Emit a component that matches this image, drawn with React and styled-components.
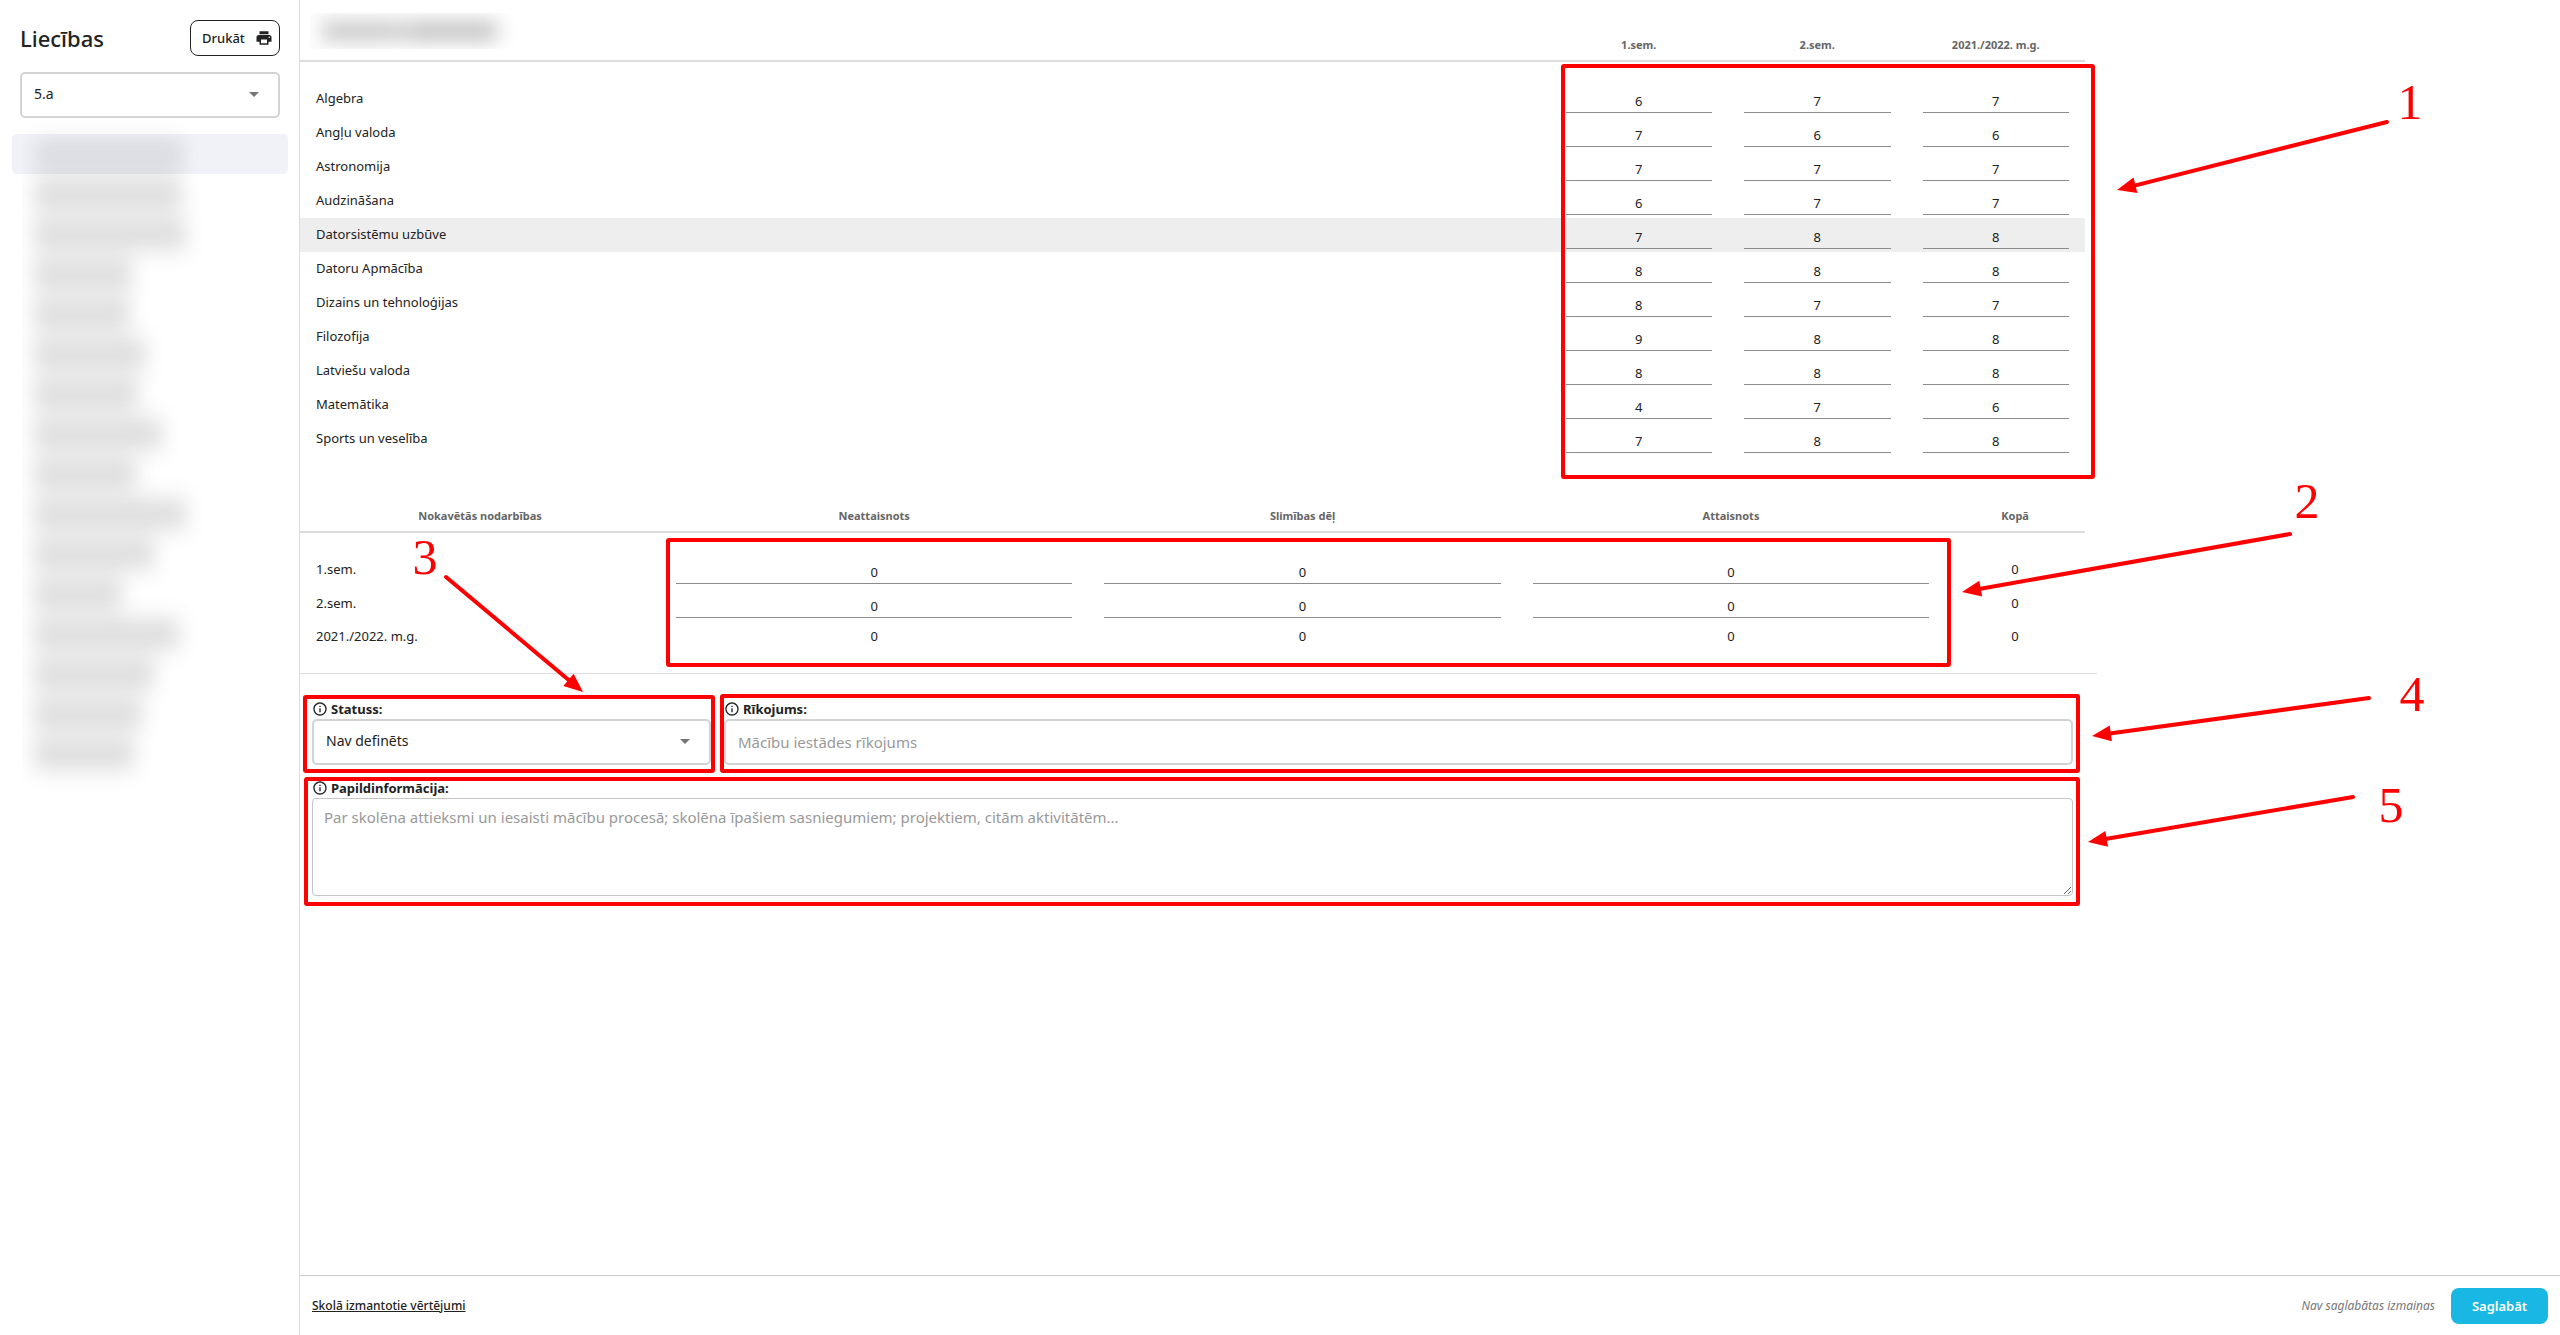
import React from "react";
import styled, { createGlobalStyle } from "styled-components";
import { MdArrowDropDown, MdInfoOutline, MdPrint } from "react-icons/md";

const TERMS = ["1.sem.", "2.sem.", "2021./2022. m.g."];

const SUBJECTS = [
  { name: "Algebra", grades: [6, 7, 7] },
  { name: "Angļu valoda", grades: [7, 6, 6] },
  { name: "Astronomija", grades: [7, 7, 7] },
  { name: "Audzināšana", grades: [6, 7, 7] },
  { name: "Datorsistēmu uzbūve", grades: [7, 8, 8], active: true },
  { name: "Datoru Apmācība", grades: [8, 8, 8] },
  { name: "Dizains un tehnoloģijas", grades: [8, 7, 7] },
  { name: "Filozofija", grades: [9, 8, 8] },
  { name: "Latviešu valoda", grades: [8, 8, 8] },
  { name: "Matemātika", grades: [4, 7, 6] },
  { name: "Sports un veselība", grades: [7, 8, 8] },
];

const ABSENCE_KINDS = ["Neattaisnots", "Slimības dēļ", "Attaisnots"];

// Student names are hidden, only the length of each is kept
const STUDENTS = [
  150, 148, 152, 98, 96, 112, 104, 128, 102, 152, 120, 88, 145, 120, 108, 100,
];

const FRAMES = [
  { x: 1563, y: 66, width: 530, height: 411 },
  { x: 668, y: 540, width: 1281, height: 125 },
  { x: 305, y: 697, width: 408, height: 74 },
  { x: 722, y: 696, width: 1356, height: 75 },
  { x: 306, y: 779, width: 1772, height: 125 },
];

const ARROWS = [
  { label: "1", at: [2410, 119], from: [2387, 122], to: [2117, 190] },
  { label: "2", at: [2307, 518], from: [2290, 534], to: [1962, 592] },
  { label: "3", at: [425, 574], from: [446, 577], to: [583, 692] },
  { label: "4", at: [2412, 711], from: [2369, 698], to: [2092, 736] },
  { label: "5", at: [2391, 822], from: [2353, 797], to: [2088, 842] },
];

const App = () => {
  return (
    <Page>
      <GlobalStyle />
      <Sidebar />
      <Main>
        <Content>
          <Tables>
            <GradeTable />
            <AbsenceTable />
          </Tables>
          <DetailsForm />
        </Content>
        <Footer>
          <FooterLink href="#vertejumi">Skolā izmantotie vērtējumi</FooterLink>
          <SaveGroup>
            <SaveHint>Nav saglabātas izmaiņas</SaveHint>
            <SaveButton type="button">Saglabāt</SaveButton>
          </SaveGroup>
        </Footer>
      </Main>
      <Annotations />
    </Page>
  );
};

const Sidebar = () => {
  return (
    <Aside>
      <SidebarHeader>
        <Title>Liecības</Title>
        <PrintButton type="button">
          Drukāt
          <MdPrint size={18} />
        </PrintButton>
      </SidebarHeader>
      <SelectWrapper>
        <Select aria-label="Klase" defaultValue="5.a">
          <option>5.a</option>
        </Select>
        <MdArrowDropDown size={24} />
      </SelectWrapper>
      <StudentList>
        {STUDENTS.map((length, index) => (
          <Student key={index} $selected={index === 0}>
            <HiddenName $selected={index === 0}>
              <NameHaze style={{ width: length }} />
            </HiddenName>
          </Student>
        ))}
      </StudentList>
    </Aside>
  );
};

const GradeTable = () => {
  return (
    <Table>
      <colgroup>
        <Col $width="70%" />
        <Col $width="10%" />
        <Col $width="10%" />
        <Col $width="10%" />
      </colgroup>
      <thead>
        <tr>
          <NameHeading>
            <HiddenTitle>
              <TitleHaze />
            </HiddenTitle>
          </NameHeading>
          {TERMS.map((term) => (
            <Heading key={term}>{term}</Heading>
          ))}
        </tr>
      </thead>
      <Body>
        {SUBJECTS.map(({ name, grades, active }) => (
          <Row key={name} $active={active}>
            <RowName>{name}</RowName>
            {grades.map((grade, index) => (
              <InputCell key={index}>
                <CellInput
                  aria-label={`${name}, ${TERMS[index]}`}
                  defaultValue={grade}
                />
              </InputCell>
            ))}
          </Row>
        ))}
      </Body>
    </Table>
  );
};

const AbsenceTable = () => {
  return (
    <Table>
      <colgroup>
        <Col $width="360px" />
        <Col $width="24%" />
        <Col $width="24%" />
        <Col $width="24%" />
        <Col $width="auto" />
      </colgroup>
      <thead>
        <tr>
          <Heading>Nokavētās nodarbības</Heading>
          {ABSENCE_KINDS.map((kind) => (
            <Heading key={kind}>{kind}</Heading>
          ))}
          <Heading>Kopā</Heading>
        </tr>
      </thead>
      <Body>
        {TERMS.map((term, index) => {
          const isYear = index === TERMS.length - 1;

          return (
            <Row key={term} $compact={isYear}>
              <RowName>{term}</RowName>
              {ABSENCE_KINDS.map((kind) =>
                isYear ? (
                  <Cell key={kind}>0</Cell>
                ) : (
                  <InputCell key={kind}>
                    <CellInput
                      aria-label={`${kind}, ${term}`}
                      defaultValue={0}
                    />
                  </InputCell>
                )
              )}
              <Cell>0</Cell>
            </Row>
          );
        })}
      </Body>
    </Table>
  );
};

const DetailsForm = () => {
  return (
    <Form>
      <Field>
        <Label htmlFor="status">
          <MdInfoOutline size={16} />
          Statuss:
        </Label>
        <SelectWrapper>
          <Select id="status" defaultValue="Nav definēts">
            <option>Nav definēts</option>
          </Select>
          <MdArrowDropDown size={24} />
        </SelectWrapper>
      </Field>
      <Field>
        <Label htmlFor="order">
          <MdInfoOutline size={16} />
          Rīkojums:
        </Label>
        <TextInput id="order" placeholder="Mācību iestādes rīkojums" />
      </Field>
      <WideField>
        <Label htmlFor="info">
          <MdInfoOutline size={16} />
          Papildinformācija:
        </Label>
        <TextArea
          id="info"
          placeholder="Par skolēna attieksmi un iesaisti mācību procesā; skolēna īpašiem sasniegumiem; projektiem, citām aktivitātēm..."
        />
      </WideField>
    </Form>
  );
};

const Annotations = () => {
  return (
    <Overlay aria-hidden="true">
      {FRAMES.map((frame) => (
        <rect
          key={`${frame.x}-${frame.y}`}
          {...frame}
          rx="1"
          fill="none"
          stroke="red"
          strokeWidth="4"
        />
      ))}
      {ARROWS.map(({ label, at, from, to }) => {
        const angle = Math.atan2(to[1] - from[1], to[0] - from[0]);
        const neck = [
          to[0] - Math.cos(angle) * 16,
          to[1] - Math.sin(angle) * 16,
        ];

        return (
          <g key={label}>
            <line
              x1={from[0]}
              y1={from[1]}
              x2={neck[0]}
              y2={neck[1]}
              stroke="red"
              strokeWidth="4"
              strokeLinecap="round"
            />
            <polygon
              points="0,0 -19,-8 -19,8"
              fill="red"
              transform={`translate(${to[0]} ${to[1]}) rotate(${
                (angle * 180) / Math.PI
              })`}
            />
            <Mark x={at[0]} y={at[1]}>
              {label}
            </Mark>
          </g>
        );
      })}
    </Overlay>
  );
};

const GlobalStyle = createGlobalStyle`
  *, *::before, *::after {
    box-sizing: border-box;
  }

  body {
    margin: 0;
    background: white;
    color: #222;
    font-family: "Noto Sans", "Open Sans", sans-serif;
    font-size: 13px;
    line-height: 16px;
  }

  button, input, select, textarea {
    font: inherit;
    color: inherit;
  }
`;

const Page = styled.div`
  position: relative;
  display: flex;
  min-height: 100vh;
  overflow: hidden;
`;

const Aside = styled.aside`
  flex: 0 0 300px;
  padding: 20px 19px 0 20px;
  border-right: 1px solid #ddd;
`;

const SidebarHeader = styled.header`
  display: flex;
  justify-content: space-between;
  align-items: center;
  margin-bottom: 16px;
`;

const Title = styled.h1`
  margin: 0;
  font-size: 22px;
  font-weight: 500;
  line-height: 36px;
`;

const PrintButton = styled.button`
  display: flex;
  align-items: center;
  justify-content: space-between;
  width: 90px;
  height: 36px;
  padding: 0 6px 0 11px;
  background: white;
  border: 1px solid #222;
  border-radius: 8px;
  font-weight: 500;
`;

const SelectWrapper = styled.div`
  position: relative;

  svg {
    position: absolute;
    top: 10px;
    right: 14px;
    color: #757575;
    pointer-events: none;
  }
`;

const Select = styled.select`
  display: block;
  width: 100%;
  height: 46px;
  padding: 0 40px 2px 12px;
  appearance: none;
  background: white;
  border: 2px solid #d3d3d3;
  border-radius: 5px;
  font-size: 14px;
`;

const StudentList = styled.ul`
  margin: 16px -8px 0;
  padding: 0;
  list-style: none;
`;

const Student = styled.li`
  height: 40px;
  background: ${(p) => (p.$selected ? "#f0f2f8" : "transparent")};
  border-radius: 5px;
`;

const HiddenName = styled.div`
  display: flex;
  width: 203px;
  height: 40px;
  margin-left: 10px;
  padding-left: 12px;
  clip-path: inset(-24px 0);
  opacity: ${(p) => (p.$selected ? 0.7 : 1)};
`;

/* Dark in the middle of the line, with a paler wash running on to the next */
const NameHaze = styled.div`
  background: linear-gradient(
    rgba(0, 0, 0, 0.08) 14px,
    rgba(0, 0, 0, 0.17) 15px 25px,
    rgba(0, 0, 0, 0.08) 26px
  );
  filter: blur(10px);
`;

const Main = styled.main`
  flex: 1;
  display: flex;
  flex-direction: column;
  min-width: 0;
`;

const Content = styled.div`
  width: 100%;
  max-width: 1797px;
`;

const Tables = styled.div`
  display: grid;
  gap: 44px;
  padding: 0 12px 20px 0;
  border-bottom: 1px solid #ddd;
`;

const Table = styled.table`
  width: 100%;
  table-layout: fixed;
  border-collapse: separate;
  border-spacing: 0;
`;

const Col = styled.col`
  width: ${(p) => p.$width};
`;

const Heading = styled.th`
  padding: 8px 0 7px;
  border-bottom: 2px solid #ddd;
  color: #666;
  font-size: 11px;
  font-weight: 700;
  vertical-align: bottom;
`;

const NameHeading = styled(Heading)`
  padding: 13px 10px 11px;
`;

const HiddenTitle = styled.div`
  width: 207px;
  height: 36px;
  padding: 9px 20px 9px 12px;
  overflow: hidden;
`;

const TitleHaze = styled.div`
  height: 18px;
  background: linear-gradient(
    to right,
    #c2c2c2 70px,
    #ccc 72px 88px,
    #bbb 90px
  );
  filter: blur(10px);
`;

const Body = styled.tbody`
  &::before {
    content: "";
    display: block;
    height: 20px;
  }
`;

const Row = styled.tr`
  height: ${(p) => (p.$compact ? 32 : 34)}px;
  background: ${(p) => (p.$active ? "#eee" : "transparent")};
`;

const RowName = styled.th`
  padding: 0 16px 2px;
  font-weight: 400;
  text-align: left;
`;

const Cell = styled.td`
  padding: 0 16px 2px;
  text-align: center;
`;

const InputCell = styled.td`
  padding: 7px 16px 3px;
`;

const CellInput = styled.input`
  display: block;
  width: 100%;
  height: 24px;
  padding: 0;
  background: transparent;
  border: 0;
  border-bottom: 1px solid #8c8c8c;
  text-align: center;
`;

const Form = styled.form`
  display: grid;
  grid-template-columns: 399px 1fr;
  gap: 13px;
  margin-right: 12px;
  padding: 25px 12px;
`;

const Field = styled.div`
  min-width: 0;
`;

const WideField = styled(Field)`
  grid-column: 1 / -1;
`;

const Label = styled.label`
  display: flex;
  align-items: center;
  gap: 3px;
  height: 20px;
  font-weight: 700;
`;

const TextInput = styled.input`
  display: block;
  width: 100%;
  height: 46px;
  padding: 0 12px;
  border: 2px solid #d3d3d3;
  border-radius: 5px;
  font-size: 15px;

  &::placeholder {
    color: #999;
  }
`;

const TextArea = styled.textarea`
  display: block;
  width: 100%;
  height: 98px;
  padding: 8px 11px;
  border: 1px solid #c4c4c4;
  border-radius: 4px;
  font-size: 15px;
  line-height: 20px;
  resize: vertical;

  &::placeholder {
    color: #999;
  }
`;

const Footer = styled.footer`
  display: flex;
  justify-content: space-between;
  align-items: center;
  height: 60px;
  margin-top: auto;
  padding: 0 12px;
  border-top: 1px solid #ccc;
`;

const FooterLink = styled.a`
  color: inherit;
  font-size: 12px;
  font-weight: 500;
`;

const SaveGroup = styled.div`
  display: flex;
  align-items: center;
  gap: 16px;
`;

const SaveHint = styled.em`
  color: #777;
  font-size: 12px;
`;

const SaveButton = styled.button`
  width: 97px;
  height: 36px;
  padding: 0;
  background: #18b7e4;
  border: 0;
  border-radius: 8px;
  color: white;
  font-weight: 600;
`;

const Overlay = styled.svg`
  position: absolute;
  top: 0;
  left: 0;
  width: 100%;
  height: 100%;
  pointer-events: none;
`;

const Mark = styled.text`
  fill: red;
  font-family: "Liberation Serif", serif;
  font-size: 50px;
  text-anchor: middle;
`;

export default App;
